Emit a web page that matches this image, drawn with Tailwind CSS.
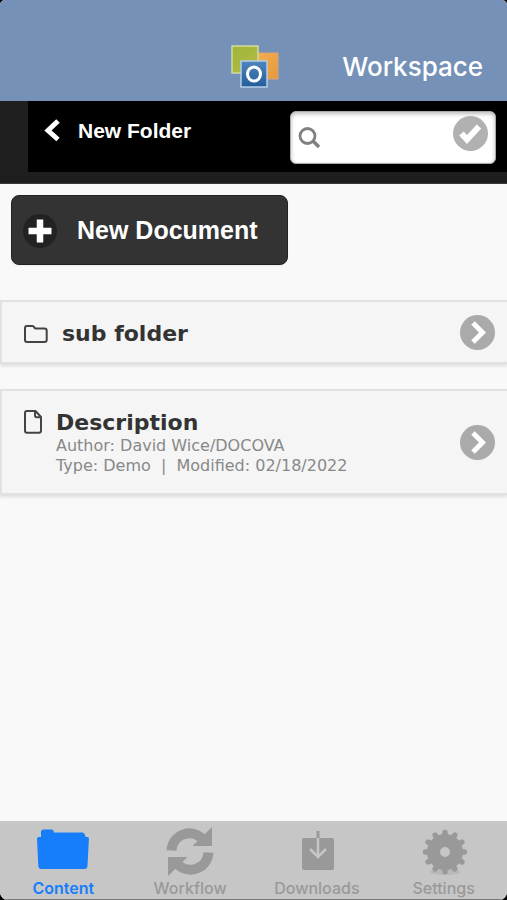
<!DOCTYPE html>
<html lang="en">
<head>
<meta charset="utf-8">
<meta name="viewport" content="width=device-width, initial-scale=1">
<title>Workspace</title>
<script src="https://cdn.jsdelivr.net/npm/@tailwindcss/browser@4"></script>
</head>
<body class="bg-black">
<div class="flex min-h-screen flex-col overflow-hidden rounded-t-[5px] rounded-b-lg bg-[#f9f9f9] font-['Liberation_Sans',Arial,sans-serif]">
  <header class="grid h-[101px] grid-cols-3 items-center bg-[#7591b7] px-6 pt-8">
    <span></span>
    <svg class="h-[46px] w-[50px] justify-self-center" viewBox="0 0 50 46" role="img" aria-label="DOCOVA">
      <defs>
        <linearGradient id="g" x2="1" y2="1"><stop stop-color="#9fb53c"/><stop offset="1" stop-color="#b3bc43"/></linearGradient>
        <linearGradient id="o" x2="1" y2="1"><stop stop-color="#f5b055"/><stop offset="1" stop-color="#e5983d"/></linearGradient>
        <linearGradient id="b" x2="0" y2="1"><stop stop-color="#5086be"/><stop offset="1" stop-color="#235d99"/></linearGradient>
      </defs>
      <rect x="25" y="9" width="24" height="26" fill="url(#o)" stroke="#dca574"/>
      <rect x="3" y="2" width="26" height="27" fill="url(#g)" stroke="#cfdb9d" stroke-width="1.5"/>
      <rect x="12" y="17" width="26" height="26" fill="url(#b)" stroke="#b5cfe8" stroke-width="1.500"/>
      <ellipse cx="25" cy="30" rx="6.500" ry="7" fill="none" stroke="#fff" stroke-width="3"/>
    </svg>
    <h1 class="justify-self-end font-['Inter',sans-serif] text-[26px] leading-8 font-medium text-white">Workspace</h1>
  </header>

  <nav class="h-[83px] border-b border-[#3a3a3a] bg-[#1e1e1e] pb-[11px] pl-7" aria-label="Folder">
    <div class="flex h-full items-start justify-between bg-black pt-[10px] pr-[11px] pl-4">
      <a href="#" class="flex h-10 items-center gap-[18px] text-[21px] font-bold text-white">
        <svg class="h-6 w-4" viewBox="0 0 16 24" fill="none" stroke="#fff" stroke-width="5" aria-hidden="true"><path d="M14 2 4 11.500l10 9"/></svg>
        New Folder
      </a>
      <form class="flex h-[53px] w-[206px] items-center rounded-md border border-[#aaa] bg-white px-[7px] shadow-[inset_0_2px_4px_#bbb]">
        <svg class="h-6 w-6 shrink-0" viewBox="0 0 24 24" fill="none" stroke="#808080" aria-hidden="true"><circle cx="9.500" cy="10" r="7.500" stroke-width="2.800"/><path d="m15 15 6 6" stroke-width="3.500"/></svg>
        <input type="search" aria-label="Search" class="min-w-0 flex-1 bg-transparent px-2 text-lg outline-none">
        <button type="submit" aria-label="Apply search" class="mb-[9px] shrink-0">
          <svg class="h-[35px] w-[35px]" viewBox="0 0 35 35" aria-hidden="true"><circle cx="17.500" cy="17.500" r="17.500" fill="#b1b1b1"/><path d="m8.500 17.500 5.500 6L26 10.500" fill="none" stroke="#fff" stroke-width="6"/></svg>
        </button>
      </form>
    </div>
  </nav>

  <main class="flex-1">
    <div class="pt-[11px] pl-[11px]">
      <button class="flex h-[70px] w-[277px] items-center gap-5 rounded-lg border border-[#222] bg-[#333] pt-[2px] pl-[11px] text-[25px] font-bold text-white shadow-xs">
        <svg class="h-[34px] w-[34px]" viewBox="0 0 34 34" aria-hidden="true"><circle cx="17" cy="17" r="17" fill="#222"/><path d="M17 5.500v23M5.500 17h23" stroke="#fff" stroke-width="6.500"/></svg>
        New Document
      </button>
    </div>

    <div class="mt-[35px] flex flex-col gap-[25px] font-['DejaVu_Sans',Verdana,sans-serif]">
      <a href="#" class="flex h-16 items-center border-2 border-r-0 border-[#e1e1e1] bg-[#f5f5f5] pt-1 pr-3 pl-[22px] shadow-[0_2px_3px_#ddd]">
        <svg class="h-[18px] w-6" viewBox="0 0 24 18" fill="none" stroke="#444" stroke-width="2" stroke-linejoin="round" aria-hidden="true"><path d="M3 1h5.500q1 0 1.500 1t1.500 1.500H20.500q2.200 0 2.200 2.200v9q0 2.200-2.200 2.200H3q-2 0-2-2.200V3q0-2 2-2z"/></svg>
        <span class="ml-[14px] flex-1 text-[22px] leading-7 font-bold text-[#333]">sub folder</span>
        <svg class="mb-1 h-[35px] w-[35px]" viewBox="0 0 35 35" aria-hidden="true"><circle cx="17.500" cy="17.500" r="17.500" fill="#aaa"/><path d="m13 8 9.500 9.500L13 27" fill="none" stroke="#fff" stroke-width="5"/></svg>
      </a>
      <a href="#" class="flex h-[106px] items-center border-2 border-r-0 border-[#e1e1e1] bg-[#f5f5f5] pr-3 pl-[22px] shadow-[0_2px_3px_#ddd]">
        <svg class="mt-[19px] h-6 w-[18px] self-start" viewBox="0 0 18 24" fill="none" stroke="#444" stroke-width="2" stroke-linejoin="round" aria-hidden="true"><path d="M3 1h8.500L17 7v13.800q0 2-2 2H3q-2 0-2-2V3q0-2 2-2z"/><path d="M11 1v4.500q0 1.700 1.700 1.700H17"/></svg>
        <span class="ml-[14px] flex flex-1 flex-col pt-[2px] text-base leading-5 whitespace-pre text-[#888]">
          <span class="text-[22px] leading-[26px] font-bold text-[#333]">Description</span>
          <span>Author: David Wice/DOCOVA</span>
          <span>Type: Demo&nbsp; |&nbsp; Modified: 02/18/2022</span>
        </span>
        <svg class="h-[35px] w-[35px]" viewBox="0 0 35 35" aria-hidden="true"><circle cx="17.500" cy="17.500" r="17.500" fill="#aaa"/><path d="m13 8 9.500 9.500L13 27" fill="none" stroke="#fff" stroke-width="5"/></svg>
      </a>
    </div>
  </main>

  <footer class="h-[79px] border-b border-[#777] bg-[#c6c6c6]">
    <nav class="grid h-full grid-cols-4 font-['Inter',sans-serif] text-base leading-5 font-medium text-[#999]" aria-label="Main">
      <a href="#" aria-current="page" class="flex flex-col items-center pt-[5px] font-semibold text-[#167efb]">
        <svg class="h-[52px] w-[54px]" viewBox="0 0 54 52" fill="currentColor" aria-hidden="true"><path d="M5 6q0-2.500 2.500-2.500h8q2 0 2.500 3H46q3 0 3.500 4.500h2q1.500 0 1.400 1.800L51.500 40q-.3 3-3 3H5.500q-3 0-3.200-3L1 12.800Q1 11 3 11h2z"/></svg>
        Content
      </a>
      <a href="#" class="flex flex-col items-center pt-[5px]">
        <svg class="h-[52px] w-[50px]" viewBox="0 0 50 52" aria-hidden="true"><path d="M6.500 24.500A18 18 0 0 1 38 13.500M43.500 26.500A18 18 0 0 1 12 37.500" fill="none" stroke="currentColor" stroke-width="10"/><path d="M47 1v19H27.500zM3 50V31h19.500z" fill="currentColor"/></svg>
        Workflow
      </a>
      <a href="#" class="flex flex-col items-center pt-[5px]">
        <svg class="h-[52px] w-[50px]" viewBox="0 0 50 52" fill="none" aria-hidden="true"><rect x="10" y="12" width="32" height="32" rx="2" fill="currentColor"/><path d="M26 5v7" stroke="currentColor" stroke-width="3"/><path d="M26 12v20M18 23l8 8 8-8" stroke="#c6c6c6" stroke-width="2.500"/></svg>
        Downloads
      </a>
      <a href="#" class="flex flex-col items-center pt-[5px]">
        <svg class="h-[52px] w-[50px]" viewBox="0 0 50 52" aria-hidden="true"><ellipse cx="26" cy="46" rx="15" ry="3" fill="#b8b8b8"/><circle cx="26" cy="26" r="11.500" fill="none" stroke="currentColor" stroke-width="13"/><path d="M26 6.500v39M6.500 26h39M16.200 9.100l19.600 33.800M35.800 9.100 16.200 42.900M9.100 16.200l33.800 19.600M42.900 16.200 9.100 35.800" fill="none" stroke="currentColor" stroke-width="5.500" stroke-linecap="round"/><circle cx="26" cy="26" r="5" fill="#c6c6c6"/></svg>
        Settings
      </a>
    </nav>
  </footer>
</div>
</body>
</html>
